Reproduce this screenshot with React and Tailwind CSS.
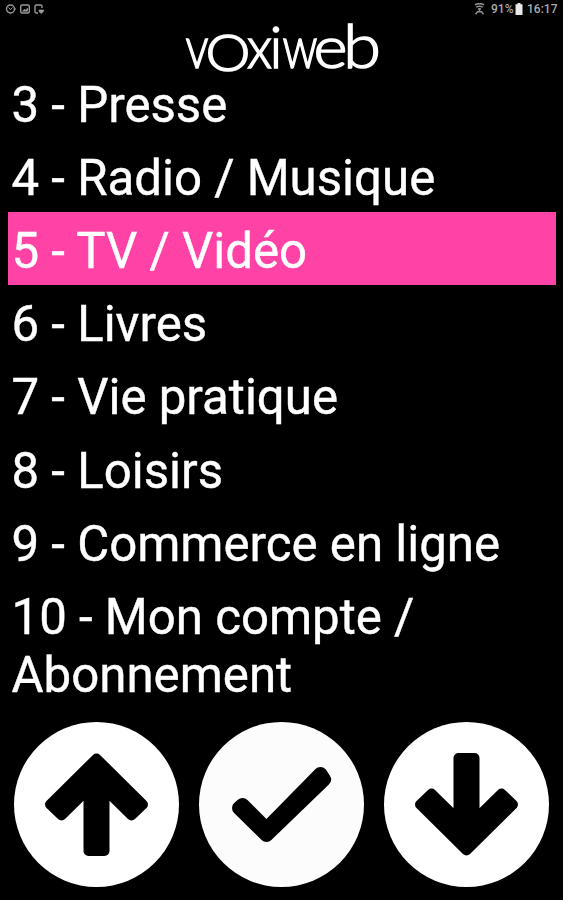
const items = [
  '3 - Presse',
  '4 - Radio / Musique',
  '5 - TV / Vidéo',
  '6 - Livres',
  '7 - Vie pratique',
  '8 - Loisirs',
  '9 - Commerce en ligne',
  '10 - Mon compte / Abonnement',
];

function StatusBar() {
  return (
    <header className="flex h-[19px] items-center justify-between pl-[5px] pr-[5px] text-[12px] font-medium leading-none text-[#aaa]">
      <svg className="-mt-px" width="42" height="12" viewBox="0 0 42 12" fill="none" stroke="#999" strokeWidth="1.4">
        <circle cx="5.5" cy="6" r="4" />
        <path d="M3.5 4.500l2 2 2-2M9.500 6h1.500" strokeWidth="1" />
        <rect x="15.7" y="2" width="8.6" height="8" rx="1.5" />
        <path d="M17.5 8.2l2-2 1 1 2-2v3z" fill="#999" strokeWidth="0.7" />
        <path d="M33 10h-1.500q-1.5 0-1.5-1.500V3.500Q30 2 31.500 2h4Q37 2 37 3.500V5" />
        <path d="M34 7h4.500v1.500l-2.250 2-2.250-2z" fill="#999" strokeWidth="0.7" />
      </svg>
      <div className="-mt-px flex items-center">
        <svg className="mr-[6px]" width="11" height="12" viewBox="0 0 11 12" fill="none" stroke="#8d8d8d" strokeWidth="1.5">
          <path d="M1 1.700q4.500-2 9 0M2.300 4q3.200-1.600 6.400 0M4 6h3M5.500 5v3.500M1.500 11.200l2-2.500h4l2 2.500" />
        </svg>
        <span className="w-[24px] whitespace-nowrap">91%</span>
        <svg className="mr-[4px]" width="8" height="12" viewBox="0 0 8 12" fill="#e8e8e8">
          <path d="M2.500 0h3v1.300h2V12h-7V1.300h2z" />
        </svg>
        <span className="w-[31px] whitespace-nowrap">16:17</span>
      </div>
    </header>
  );
}

function Logo() {
  return (
    <svg
      className="mx-auto block shrink-0 overflow-visible"
      width="200"
      height="56"
      viewBox="182 19 200 56"
      fill="#fff"
      stroke="#fff"
      strokeWidth="1.5"
      fontFamily="Lato, sans-serif"
      fontWeight="300"
      fontSize="58"
    >
      <text x="185.500" y="67.500" textLength="23" lengthAdjust="spacingAndGlyphs">v</text>
      <text x="205.500" y="71" fontSize="52" textLength="45" lengthAdjust="spacingAndGlyphs">O</text>
      <text x="247" y="67.500" textLength="25" lengthAdjust="spacingAndGlyphs">x</text>
      <text x="269.500" y="67.500">i</text>
      <text x="282.500" y="67.500" textLength="35" lengthAdjust="spacingAndGlyphs">w</text>
      <text x="313.500" y="67.500" textLength="34" lengthAdjust="spacingAndGlyphs">e</text>
      <text x="343" y="67.500" fontSize="62" textLength="38" lengthAdjust="spacingAndGlyphs">b</text>
    </svg>
  );
}

function Arrow({ down }) {
  return (
    <svg className={down ? 'size-full rotate-180' : 'size-full'} viewBox="0 0 165 165" stroke="#000" strokeWidth="10" strokeLinejoin="round">
      <path d="M82.500 36.500L129 82.500L117.500 93.500L90.500 67V129H74.500V67L47.500 93.500L36 82.500Z" />
      <path d="M70 60H95V80H70Z" stroke="none" />
    </svg>
  );
}

function Check() {
  return (
    <svg className="size-full" viewBox="0 0 165 165" stroke="#000" strokeWidth="14" strokeLinejoin="round">
      <path d="M43.500 83L67.500 107L121.500 52L125 57.500L67.500 113L40 86Z" />
    </svg>
  );
}

export default function App() {
  return (
    <div className="flex h-[900px] w-[563px] flex-col overflow-hidden bg-black font-[Roboto,sans-serif] text-white">
      <StatusBar />
      <Logo />
      <main className="-mt-[9.8px] pl-[8px] pr-[7px]">
        <ul>
          {items.map((item, i) => (
            <li
              key={item}
              className={`pb-[4.8px] pl-[3.5px] pt-[10.4px] text-[49.2px] leading-[58px] [-webkit-text-stroke:0.4px_white] ${i === 2 ? 'bg-[#ff42a5]' : ''}`}
            >
              {item}
            </li>
          ))}
        </ul>
      </main>
      <nav className="mb-[13.5px] mt-auto flex justify-between pl-[14.3px] pr-[13.7px]">
        <button className="size-[165px] rounded-full bg-white" aria-label="Monter"><Arrow /></button>
        <button className="size-[165px] rounded-full bg-[#fcfcfc]" aria-label="Valider"><Check /></button>
        <button className="size-[165px] rounded-full bg-white" aria-label="Descendre"><Arrow down /></button>
      </nav>
    </div>
  );
}
